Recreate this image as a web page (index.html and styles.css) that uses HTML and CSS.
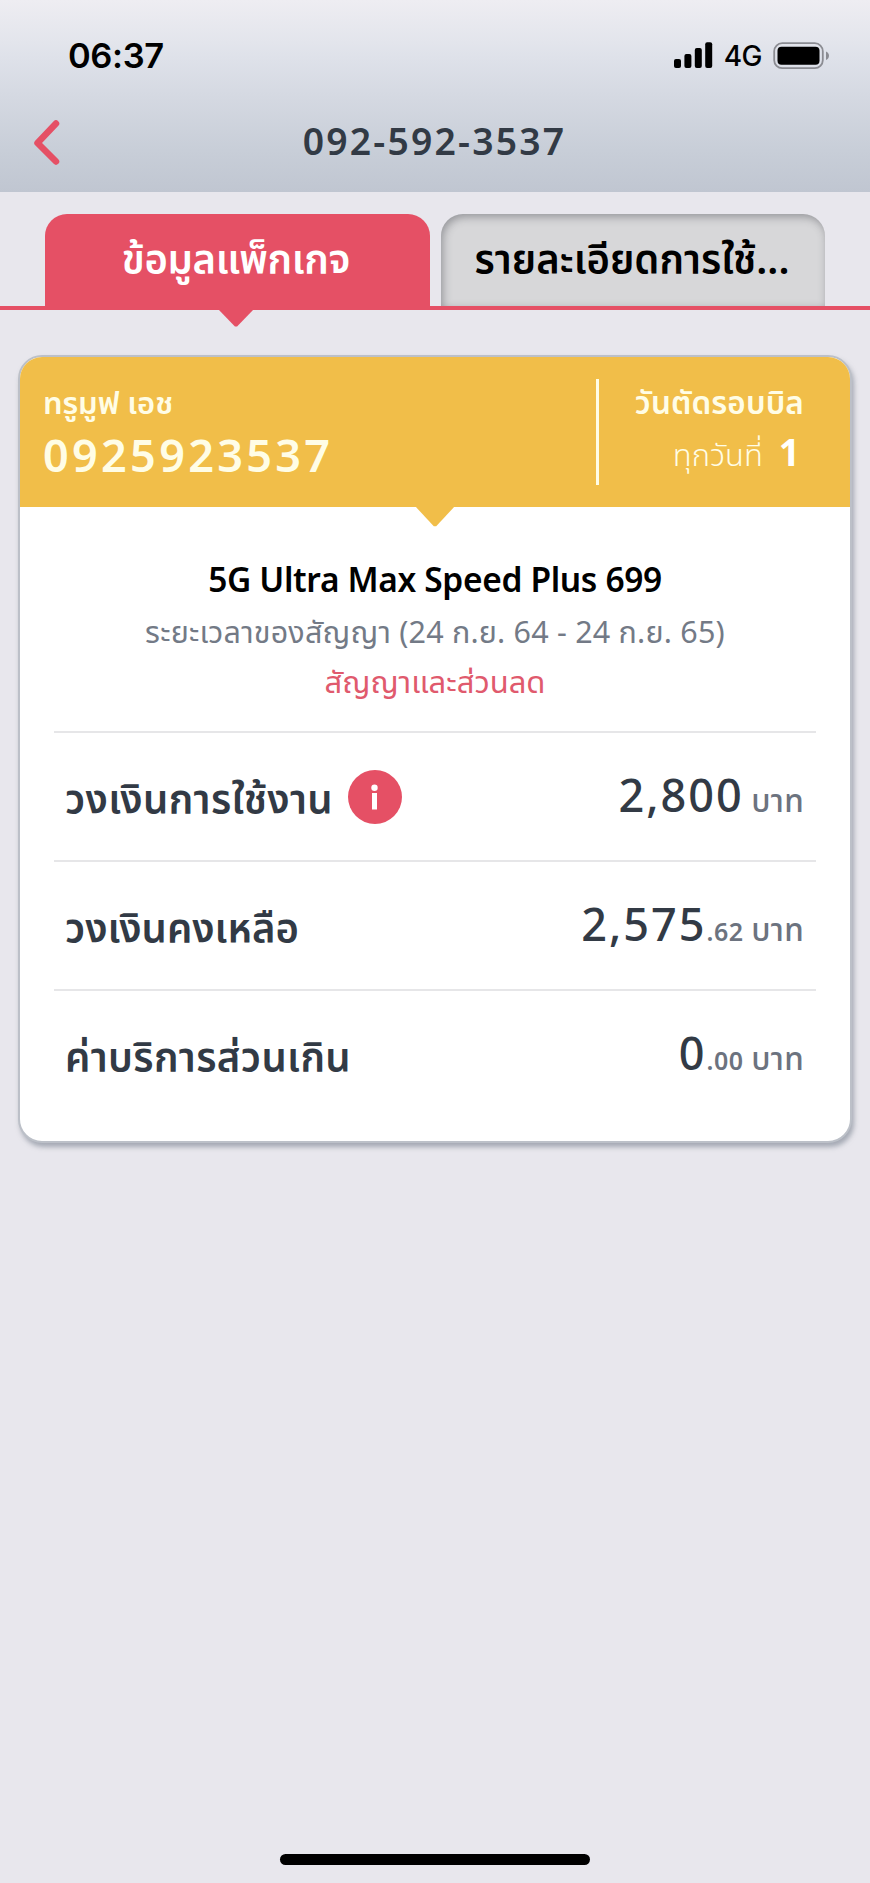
FILE: index.html
```
<!DOCTYPE html>
<html lang="th">
<head>
<meta charset="utf-8">
<title>092-592-3537</title>
<link rel="stylesheet" href="styles.css">
</head>
<body>
<div class="screen">
  <header class="top">
    <div class="status">
      <span class="time">06:37</span>
      <div class="status-right">
        <svg class="signal" width="39" height="26" viewBox="0 0 39 26"><rect x="0" y="17" width="7" height="9" rx="2"/><rect x="10.4" y="12" width="7" height="14" rx="2"/><rect x="20.8" y="6" width="7" height="20" rx="2"/><rect x="31.2" y="0.3" width="7" height="25.7" rx="2"/></svg>
        <span class="net">4G</span>
        <svg class="battery" width="57" height="28" viewBox="0 0 57 28"><rect x="1.2" y="1.2" width="48.6" height="25" rx="8" fill="none" stroke="#8b8c92" stroke-width="1.8"/><rect x="4.5" y="4.7" width="42" height="18" rx="4"/><path d="M53 9.500q3 1.400 3 4.300t-3 4.300z" fill="#8b8c92"/></svg>
      </div>
    </div>
    <div class="nav">
      <svg class="back" width="28" height="46" viewBox="0 0 28 46"><path d="M23 3.500 4.500 23 23 41.500" fill="none" stroke="#e55065" stroke-width="6.500" stroke-linecap="round" stroke-linejoin="round"/></svg>
      <h1 class="title">092-592-3537</h1>
    </div>
  </header>
  <nav class="tabs">
    <div class="tab tab-active">ข้อมูลแพ็กเกจ</div>
    <div class="tab tab-idle">รายละเอียดการใช้...</div>
  </nav>
  <main class="card">
    <section class="card-head">
      <div class="owner">
        <div class="brand">ทรูมูฟ เอช</div>
        <div class="number">0925923537</div>
      </div>
      <div class="cycle">
        <div class="cycle-label">วันตัดรอบบิล</div>
        <div class="cycle-day">ทุกวันที่<b>1</b></div>
      </div>
    </section>
    <section class="plan">
      <h2 class="plan-name">5G Ultra Max Speed Plus 699</h2>
      <p class="period">ระยะเวลาของสัญญา (24 ก.ย. 64 - 24 ก.ย. 65)</p>
      <a class="link">สัญญาและส่วนลด</a>
    </section>
    <section class="rows">
      <div class="row"><span class="label">วงเงินการใช้งาน</span><span class="info"><svg width="54" height="54" viewBox="0 0 54 54"><circle cx="27" cy="27" r="27" fill="#e55065"/><circle cx="26.500" cy="17.800" r="3.200" fill="#fff"/><rect x="24" y="23" width="5" height="16.500" fill="#fff"/></svg></span><span class="value"><span class="amount">2,800</span><span class="unit">บาท</span></span></div>
      <div class="row"><span class="label label-tight">วงเงินคงเหลือ</span><span class="value"><span class="amount">2,575</span><span class="dec">.62</span><span class="unit">บาท</span></span></div>
      <div class="row"><span class="label">ค่าบริการส่วนเกิน</span><span class="value"><span class="amount">0</span><span class="dec">.00</span><span class="unit">บาท</span></span></div>
    </section>
  </main>
  <div class="home"></div>
</div>
</body>
</html>
```

FILE: styles.css
```
* { box-sizing: border-box; }
body { margin: 0; background: #e8e7ed; font-family: "Noto Sans", "Noto Sans Thai", sans-serif; color: #323a45; }
h1, h2, p { margin: 0; }
.screen { width: 870px; height: 1883px; display: flex; flex-direction: column; overflow: hidden; white-space: nowrap; }
.top { height: 192px; background: linear-gradient(#eeedf2 0, #e3e5ec 42px, #dfe2ea 55px, #d5d9e2 95px, #c8ced8 150px, #c0c6d1 192px); }
.status { display: flex; justify-content: space-between; align-items: flex-start; height: 100px; padding: 42px 40px 0 68px; font-family: Inter, sans-serif; color: #000; }
.time { font-size: 34.5px; font-weight: 600; line-height: 27px; letter-spacing: -0.4px; }
.status-right { display: flex; }
.net { margin-left: 11px; font-size: 28px; font-weight: 450; line-height: 28px; letter-spacing: -0.5px; }
.battery { margin-left: 11px; }
.nav { position: relative; height: 92px; padding-top: 20px; }
.back { position: absolute; left: 33px; top: 20px; }
.title { padding-right: 1px; text-align: center; font-size: 37.3px; font-weight: 600; line-height: 42px; letter-spacing: 2.2px; }
.tabs { display: flex; gap: 11px; height: 118px; padding: 22px 45px 0; border-bottom: 4px solid #e55065; }
.tab { position: relative; flex: 1; height: 92px; border-radius: 22px 22px 0 0; text-align: center; font-size: 40px; font-weight: 600; line-height: 89px; }
.tab-active { padding-right: 3px; background: #e55065; color: #fff; letter-spacing: -0.35px; }
.tab-active::after { content: ""; position: absolute; left: 173px; top: 95px; width: 36px; height: 18px; background: #e55065; clip-path: polygon(0 0, 100% 0, 53% 97%, 47% 97%); }
.tab-idle { padding-right: 2px; background: #d7d7d9; color: #000; box-shadow: inset 2px 3px 9px rgba(60, 62, 70, .42); }
.card { margin: 45px 18px 0 18px; height: 788px; border: 2px solid #bcc0c8; border-radius: 24px; background: #fff; box-shadow: 2px 4px 5px rgba(120, 128, 142, .6); }
.card-head { position: relative; display: flex; justify-content: space-between; height: 150px; padding: 22px 46px 0 23px; background: #f1be49; border-radius: 22px 22px 0 0; color: #fffde6; }
.card-head::after { content: ""; position: absolute; left: 395px; top: 149px; width: 40px; height: 21px; background: #f1be49; clip-path: polygon(0 0, 100% 0, 53% 97%, 47% 97%); }
.brand { height: 50px; font-size: 31px; font-weight: 600; line-height: 46px; letter-spacing: -0.1px; }
.number { font-size: 45px; font-weight: 600; line-height: 52px; letter-spacing: 3.3px; }
.cycle { width: 208px; height: 106px; border-left: 3px solid #fffde6; text-align: right; }
.cycle-label { height: 50px; font-size: 31.5px; font-weight: 600; line-height: 46px; letter-spacing: 0.1px; }
.cycle-day { padding-right: 4px; font-size: 31px; font-weight: 300; line-height: 45px; }
.cycle-day b { margin-left: 16px; font-size: 37px; font-weight: 700; color: #fff; }
.plan { height: 224px; display: flex; flex-direction: column; align-items: center; padding-top: 47px; }
.plan-name { font-size: 33.5px; font-weight: 600; line-height: 50px; letter-spacing: -0.35px; color: #000; }
.period { padding-top: 2px; font-size: 30.5px; font-weight: 400; line-height: 50px; letter-spacing: 0.2px; color: #737a86; }
.link { font-size: 31px; font-weight: 400; line-height: 50px; color: #e05a6d; }
.rows { padding: 0 34px; }
.row { display: flex; height: 129px; padding: 0 12px 0 11px; border-top: 2px solid #e6e6e8; }
.label { font-size: 40px; font-weight: 600; line-height: 132px; letter-spacing: 0.35px; }
.label-tight { letter-spacing: 0; }
.info { margin: 37px 0 0 15px; }
.value { margin-left: auto; color: #6c737f; line-height: 124px; }
.amount { font-size: 45px; font-weight: 500; letter-spacing: 2px; color: #323a45; }
.dec { font-size: 25px; font-weight: 600; letter-spacing: 0.6px; }
.unit { margin-left: 7.5px; font-size: 31.5px; font-weight: 500; letter-spacing: 0.3px; }
.home { width: 310px; height: 11px; margin: auto auto 18px; border-radius: 6px; background: #000; }
```
